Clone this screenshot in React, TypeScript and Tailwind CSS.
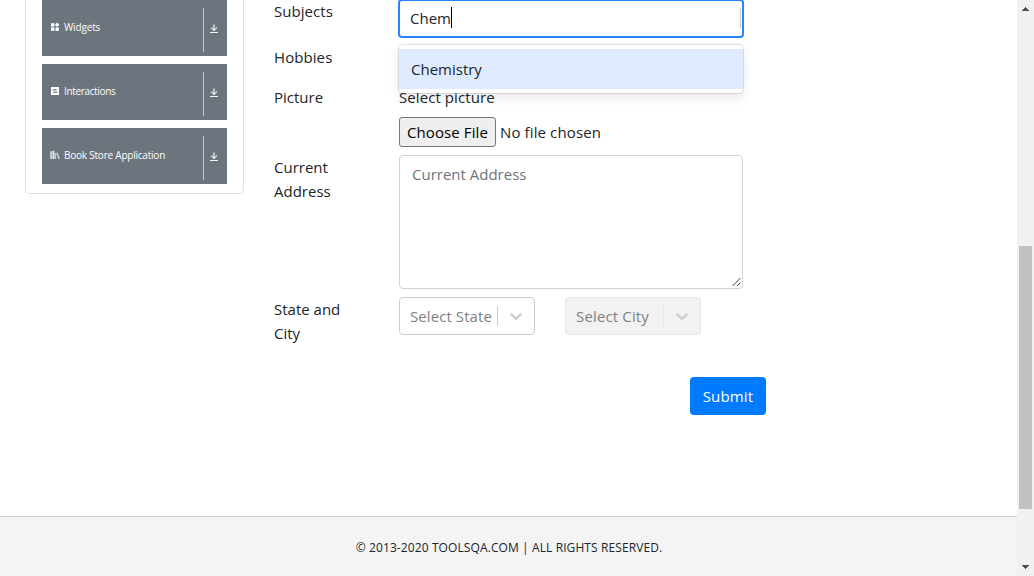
import type { ReactNode } from "react";

function WidgetsIcon() {
  return (
    <svg viewBox="0 0 10 10" className="h-[10px] w-[10px]" fill="#fff">
      <rect x="1" y="1.2" width="3.4" height="3.4" />
      <path d="M7.1 0.5 9.4 2.8 7.1 5.1 4.9 2.8Z" />
      <rect x="1" y="5.5" width="3.4" height="3.4" />
      <rect x="5.5" y="5.5" width="3.4" height="3.4" />
    </svg>
  );
}

function InteractionsIcon() {
  return (
    <svg viewBox="0 0 10 10" className="h-[10px] w-[10px]">
      <rect x="1" y="1" width="8" height="8" rx="0.3" fill="#fff" />
      <path d="M3 5V3.5H7M3 6.5H7V5M4 5H6" fill="none" stroke="#6c757d" strokeWidth="0.8" />
    </svg>
  );
}

function BooksIcon() {
  return (
    <svg viewBox="0 0 10 10" className="h-[10px] w-[10px]" fill="#fff">
      <rect x="0.2" y="1.2" width="2" height="7.8" opacity="0.7" />
      <rect x="2.6" y="0.8" width="1.8" height="8.2" opacity="0.85" />
      <rect x="4.8" y="3" width="1.3" height="6" opacity="0.65" />
      <path d="M6.2 3 7.5 2.6 9.9 8.6 8.3 9.1Z" opacity="0.7" />
    </svg>
  );
}

function DownIcon() {
  return (
    <svg viewBox="0 0 10 10" className="h-[10px] w-[10px]" fill="none" stroke="#fff">
      <path d="M5 0.5V6" strokeWidth="1.8" opacity="0.65" />
      <path d="M2 3.6 5 6.4 8 3.6" strokeWidth="1.2" opacity="0.85" />
      <path d="M1 8.5H9" strokeWidth="1" opacity="0.9" />
    </svg>
  );
}

function Group({ icon, label }: { icon: ReactNode; label: ReactNode }) {
  return (
    <div className="flex h-14 shrink-0 items-center bg-[#6c757d] pl-2 text-white">
      <div className="flex h-4 items-center gap-1 pb-0.5">
        {icon}
        <span className="text-[10px] leading-4 font-medium whitespace-nowrap">{label}</span>
      </div>
      <div className="mt-1 ml-auto flex h-11 w-6 items-center border-l border-[#c4c8cb] pb-[2px] pl-[5px]">
        <DownIcon />
      </div>
    </div>
  );
}

function Select({ label, disabled }: { label: ReactNode; disabled?: boolean }) {
  return (
    <div
      className={
        disabled
          ? "flex h-[38px] w-[136px] items-center rounded border border-[#e6e6e6] bg-[#f2f2f2] pl-[10px]"
          : "flex h-[38px] w-[136px] items-center rounded border border-[#cccccc] bg-white pl-[10px]"
      }
    >
      <span className="flex-1 whitespace-nowrap text-[#808080]">{label}</span>
      <div className={disabled ? "h-5 w-px bg-[#e6e6e6]" : "h-5 w-px bg-[#cccccc]"} />
      <svg viewBox="0 0 20 20" className="mx-2 h-5 w-5" fill="#cccccc">
        <path d="M4.516 7.548c0.436-0.446 1.043-0.481 1.576 0l3.908 3.747 3.908-3.747c0.533-0.481 1.141-0.446 1.574 0 0.436 0.445 0.408 1.197 0 1.615-0.406 0.418-4.695 4.502-4.695 4.502-0.217 0.223-0.502 0.335-0.787 0.335s-0.57-0.112-0.789-0.335c0 0-4.287-4.084-4.695-4.502s-0.436-1.17 0-1.615z" />
      </svg>
    </div>
  );
}

function Scrollbar() {
  return (
    <div className="flex h-full w-[17px] flex-col items-center bg-[#f1f1f1]">
      <svg viewBox="0 0 17 17" className="h-[17px] w-[17px]" fill="#505050">
        <path d="M5 11H12V10H11V9H10V8H9V7H8V8H7V9H6V10H5Z" />
      </svg>
      <div className="mt-[229px] h-[263px] w-[13px] bg-[#c1c1c1]" />
      <svg viewBox="0 0 17 17" className="mt-auto h-[17px] w-[17px]" fill="#505050">
        <path d="M5 6H12V7H11V8H10V9H9V10H8V9H7V8H6V7H5Z" />
      </svg>
    </div>
  );
}

export default function App() {
  return (
    <div className="flex h-[576px] w-[1034px] overflow-hidden bg-white font-['Open_Sans',sans-serif] text-[15px] leading-6 text-[#212529]">
      <div className="flex h-full w-[1017px] flex-col">
        <div className="flex h-[516px] shrink-0 items-start">
          <aside className="ml-[25px] flex h-[194px] w-[219px] flex-col gap-2 rounded-b-[5px] border border-t-0 border-[#dfdfdf] px-4">
            <Group icon={<WidgetsIcon />} label={<span className="tracking-[-0.15px]">Widgets</span>} />
            <Group icon={<InteractionsIcon />} label={<span className="tracking-[-0.35px]">Interactions</span>} />
            <Group icon={<BooksIcon />} label={<span className="tracking-[-0.22px]">Book Store Application</span>} />
          </aside>
          <main className="-mt-px ml-[30px] flex w-[492px] flex-col">
            <div className="relative flex h-[46px]">
              <div className="w-[124px]"><span className="tracking-[0.05px]">Subjects</span></div>
              <div className="flex h-[39px] w-[346px] items-center rounded border-2 border-[#2684ff] pr-px pb-[2px] pl-[10px]">
                <span>Chem</span>
                <span className="-mt-px h-[21px] w-px bg-black" />
                <span className="ml-auto h-5 w-px bg-[#cccccc]" />
              </div>
              <div className="absolute top-[46px] left-[125px] z-10 w-[344px] rounded bg-white py-1 shadow-[0_0_0_1px_rgba(0,0,0,0.1),0_4px_11px_rgba(0,0,0,0.1)]">
                <div className="h-10 bg-[#deebff] px-3 py-2"><span>Chemistry</span></div>
              </div>
            </div>
            <div className="h-10"><span className="tracking-[0.08px]">Hobbies</span></div>
            <div className="flex h-[70px]">
              <div className="w-[125px]"><span>Picture</span></div>
              <div>
                <div className="h-8"><span className="tracking-[0.08px]">Select picture</span></div>
                <div className="flex items-center gap-1">
                  <button className="h-[30px] w-[97px] rounded-[3px] border border-[#767676] bg-[#efefef] whitespace-nowrap text-black"><span className="tracking-[0.1px]">Choose File</span></button>
                  <span className="tracking-[0.12px]">No file chosen</span>
                </div>
              </div>
            </div>
            <div className="flex h-[142px]">
              <div className="w-[125px] pr-[30px]">Current Address</div>
              <div className="flex h-[134px] w-[344px] flex-col justify-between rounded border border-[#ced4da] pt-[6px] pb-[7px] pl-3 text-[#6c757d]">
                <span>Current Address</span>
                <svg viewBox="0 0 10 10" className="-mb-[6px] h-[10px] w-[10px] self-end" stroke="#444" strokeWidth="1">
                  <path d="M0.5 9 8.5 1M5 9 8.5 5.5" />
                </svg>
              </div>
            </div>
            <div className="flex h-20">
              <div className="w-[125px] pr-[30px]">State and City</div>
              <div className="flex gap-[30px]">
                <Select label={<span className="tracking-[0.08px]">Select State</span>} />
                <Select label={<span className="tracking-[0.15px]">Select City</span>} disabled />
              </div>
            </div>
            <button className="h-[38px] w-[76px] self-end rounded bg-[#007bff] text-white"><span className="tracking-[0.15px]">Submit</span></button>
          </main>
        </div>
        <footer className="flex flex-1 items-center justify-center border-t border-[#cccccc] bg-[#f4f4f4] pt-0.5 pl-px text-[12px] text-[#212529]">
          <span className="tracking-[0.1px] whitespace-nowrap">© 2013-2020 TOOLSQA.COM | ALL RIGHTS RESERVED.</span>
        </footer>
      </div>
      <Scrollbar />
    </div>
  );
}
